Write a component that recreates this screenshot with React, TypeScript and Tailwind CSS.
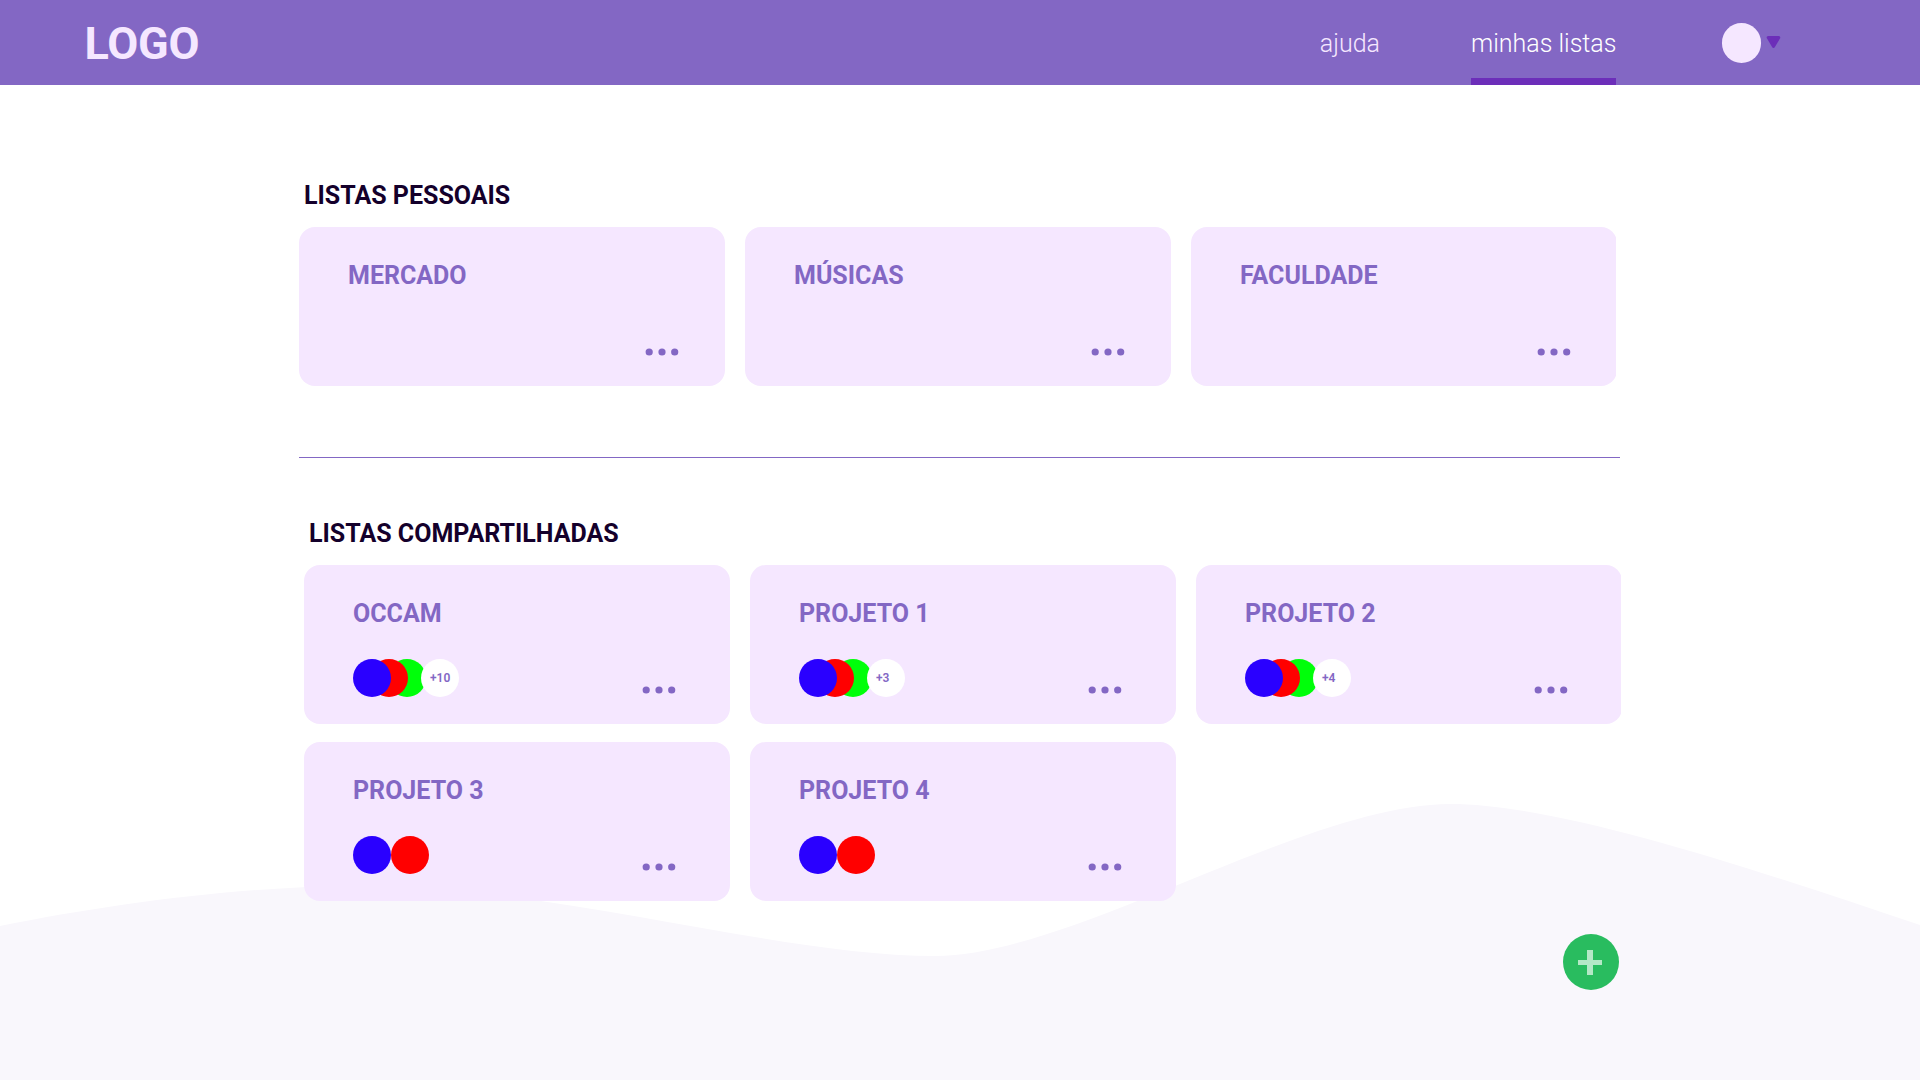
import React from "react";

const FONT = "font-['Roboto',sans-serif]";

type Shared = { name: string; extra?: string };

const personal = ["MERCADO", "MÚSICAS", "FACULDADE"];
const shared: Shared[] = [
  { name: "OCCAM", extra: "+10" },
  { name: "PROJETO 1", extra: "+3" },
  { name: "PROJETO 2", extra: "+4" },
  { name: "PROJETO 3" },
  { name: "PROJETO 4" },
];

function Dots() {
  return (
    <svg width="34" height="8" viewBox="0 0 34 8" fill="#8367c4">
      <circle cx="4.200" cy="4" r="3.600" />
      <circle cx="17" cy="4" r="3.600" />
      <circle cx="29.700" cy="4" r="3.600" />
    </svg>
  );
}

function Title({ children }: { children: React.ReactNode }) {
  return <h3 className="text-[25px] leading-[30px] font-bold text-[#8367c4] whitespace-nowrap">{children}</h3>;
}

function PersonalCard({ name }: { name: string }) {
  return (
    <article className="flex h-[159px] w-[426px] shrink-0 flex-col justify-between rounded-2xl bg-[#f5e7ff] pt-[34px] pb-[30px] pl-[49px]">
      <Title>{name}</Title>
      <button className="mr-[46px] self-end">
        <Dots />
      </button>
    </article>
  );
}

function SharedCard({ name, extra }: Shared) {
  return (
    <article className="flex h-[159px] w-[426px] shrink-0 flex-col justify-between rounded-2xl bg-[#f5e7ff] pt-[34px] pb-[27px] pl-[49px]">
      <Title>{name}</Title>
      <div className="flex items-end justify-between">
        <div className="flex">
          <span className="z-20 size-[38px] rounded-full bg-[#2a00ff]" />
          {extra ? (
            <>
              <span className="z-10 -ml-[21px] size-[38px] rounded-full bg-[#ff0000]" />
              <span className="-ml-5 size-[38px] rounded-full bg-[#00ff0a]" />
              <span className="z-10 -ml-[5px] flex size-[38px] items-center rounded-full bg-white pl-[9px] text-xs font-semibold text-[#8367c4]">
                {extra}
              </span>
            </>
          ) : (
            <span className="size-[38px] rounded-full bg-[#ff0000]" />
          )}
        </div>
        <button className="mr-[54px] mb-[3px]">
          <Dots />
        </button>
      </div>
    </article>
  );
}

export default function App() {
  return (
    <div className={`relative isolate h-[1080px] w-[1920px] overflow-hidden bg-white ${FONT}`}>
      <svg className="absolute inset-0 -z-10" width="1920" height="1080" viewBox="0 0 1920 1080">
        <path
          d="M0 926C110 904 240 886 360 886C560 886 775 956 935.500 956C1071 956 1307 804 1450 804C1560 804 1750 868 1920 925V1080H0Z"
          fill="#f9f7fc"
        />
      </svg>

      <header className="flex h-[85px] items-stretch bg-[#8367c4] pl-[84.5px]">
        <div className="flex items-center pt-[2px] text-[45px] leading-none font-bold tracking-[-0.2px] text-[#f5e7ff]">
          LOGO
        </div>
        <nav className="ml-auto flex gap-[91px] text-[25px] font-light">
          <a className="flex h-full items-center pt-[2px] text-[#f5e7ff]">ajuda</a>
          <a className="flex h-full w-[145px] items-center border-b-[7px] border-[#6c2eb9] pt-[9px] whitespace-nowrap text-white">
            minhas listas
          </a>
        </nav>
        <div className="mr-[139px] ml-[106px] flex items-center gap-[5px]">
          <span className="h-10 w-[39px] rounded-full bg-[#f5e7ff]" />
          <svg width="15" height="13" viewBox="0 0 15 13">
            <path d="M2.200 1.500H12.800L7.500 10.500Z" fill="#6c2eb9" stroke="#6c2eb9" strokeWidth="3" strokeLinejoin="round" />
          </svg>
        </div>
      </header>

      <main className="ml-[299px] w-[1322px] pt-[96px]">
        <section className="w-[1317px] overflow-hidden">
          <h2 className="ml-[5px] text-[25px] leading-[30px] font-bold text-[#14002b]">LISTAS PESSOAIS</h2>
          <div className="mt-4 flex gap-5">
            {personal.map((name) => (
              <PersonalCard key={name} name={name} />
            ))}
          </div>
        </section>
        <hr className="mt-[71px] w-[1321px] border-t border-[#8367c4]" />
        <section className="ml-[5px] overflow-hidden pt-[61px]">
          <h2 className="ml-[5px] text-[25px] leading-[30px] font-bold text-[#14002b]">LISTAS COMPARTILHADAS</h2>
          <div className="mt-4 grid grid-cols-[426px_426px_426px] gap-x-5 gap-y-[18px]">
            {shared.map((item) => (
              <SharedCard key={item.name} {...item} />
            ))}
          </div>
        </section>
      </main>

      <button className="absolute top-[934px] left-[1563px] flex size-14 items-center justify-center rounded-full bg-[#29bc5f]">
        <svg className="mr-[2px]" width="24" height="25" viewBox="0 0 24 25" fill="#b4e8c6">
          <path d="M9 0H15V10H24V15H15V25H9V15H0V10H9Z" />
        </svg>
      </button>
    </div>
  );
}
